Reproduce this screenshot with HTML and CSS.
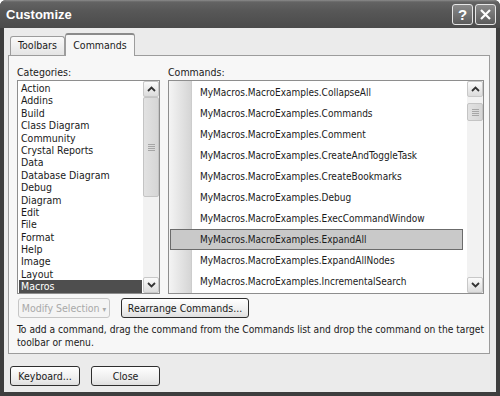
FILE: index.html
```html
<!DOCTYPE html>
<html>
<head>
  <meta charset="utf-8">
  <title>Customize</title>
  <link rel="stylesheet" href="styles.css">
</head>
<body>
  <div class="window">
    <div class="titlebar">
      <span class="title">Customize</span>
      <div class="caption">
        <span class="cap-btn help">?</span>
        <span class="cap-btn">
          <svg width="13" height="13" viewBox="0 0 13 13"><path d="M2 2 L11 11 M11 2 L2 11" stroke="#fff" stroke-width="2.2" fill="none"/></svg>
        </span>
      </div>
    </div>

    <div class="client">
      <div class="tabs">
        <div class="tab toolbars">Toolbars</div>
        <div class="tab active">Commands</div>
      </div>

      <div class="panel">
        <div class="lists">
          <div class="cat-col">
            <div class="label">Categories:</div>
            <div class="listbox">
              <ul class="cat-items">
                <li>Action</li>
                <li>Addins</li>
                <li>Build</li>
                <li>Class Diagram</li>
                <li>Community</li>
                <li>Crystal Reports</li>
                <li>Data</li>
                <li>Database Diagram</li>
                <li>Debug</li>
                <li>Diagram</li>
                <li>Edit</li>
                <li>File</li>
                <li>Format</li>
                <li>Help</li>
                <li>Image</li>
                <li>Layout</li>
                <li class="selected">Macros</li>
              </ul>
              <div class="scrollbar">
                <span class="sb-btn"><svg width="9" height="6" viewBox="0 0 9 6"><path d="M1 5 L4.5 1.5 L8 5" stroke="#333" stroke-width="1.8" fill="none"/></svg></span>
                <span class="sb-thumb tall"><i></i><i></i><i></i><i></i></span>
                <span class="sb-track"></span>
                <span class="sb-btn"><svg width="9" height="6" viewBox="0 0 9 6"><path d="M1 1 L4.5 4.5 L8 1" stroke="#333" stroke-width="1.8" fill="none"/></svg></span>
              </div>
            </div>
          </div>

          <div class="cmd-col">
            <div class="label">Commands:</div>
            <div class="listbox">
              <ul class="cmd-items">
                <li>MyMacros.MacroExamples.CollapseAll</li>
                <li>MyMacros.MacroExamples.Commands</li>
                <li>MyMacros.MacroExamples.Comment</li>
                <li>MyMacros.MacroExamples.CreateAndToggleTask</li>
                <li>MyMacros.MacroExamples.CreateBookmarks</li>
                <li>MyMacros.MacroExamples.Debug</li>
                <li>MyMacros.MacroExamples.ExecCommandWindow</li>
                <li class="selected">MyMacros.MacroExamples.ExpandAll</li>
                <li>MyMacros.MacroExamples.ExpandAllNodes</li>
                <li>MyMacros.MacroExamples.IncrementalSearch</li>
              </ul>
              <div class="scrollbar">
                <span class="sb-btn"><svg width="9" height="6" viewBox="0 0 9 6"><path d="M1 5 L4.5 1.5 L8 5" stroke="#333" stroke-width="1.8" fill="none"/></svg></span>
                <span class="sb-thumb short"><i></i><i></i><i></i><i></i></span>
                <span class="sb-track"></span>
                <span class="sb-btn"><svg width="9" height="6" viewBox="0 0 9 6"><path d="M1 1 L4.5 4.5 L8 1" stroke="#333" stroke-width="1.8" fill="none"/></svg></span>
              </div>
            </div>
          </div>
        </div>

        <div class="actions">
          <button class="btn disabled modify">Modify Selection <span class="drop">&#9662;</span></button>
          <button class="btn rearrange">Rearrange Commands...</button>
        </div>

        <p class="hint">To add a command, drag the command from the Commands list and drop the command on the target toolbar or menu.</p>
      </div>

      <div class="footer">
        <button class="btn keyboard">Keyboard...</button>
        <button class="btn close">Close</button>
      </div>
    </div>
  </div>
</body>
</html>
```

FILE: styles.css
```css
* { box-sizing: border-box; }
body { margin: 0; background: #fff; font-family: "DejaVu Sans Condensed", "DejaVu Sans", "Liberation Sans", sans-serif; font-stretch: condensed; font-size: 10px; color: #1a1a1a; }

.window { width: 500px; height: 396px; background: #3e3e3e; padding-bottom: 4px; display: flex; flex-direction: column; border-radius: 6px 6px 0 0; }

/* title bar */
.titlebar { height: 28px; flex: none; display: flex; align-items: center; justify-content: space-between; padding: 0 4px 0 6px; border-radius: 6px 6px 0 0; background: linear-gradient(#8c8c8c 0, #636363 2px, #575757 40%, #4b4b4b 100%); }
.title { color: #fff; font-family: "Liberation Sans", Arial, sans-serif; font-weight: bold; font-size: 13px; }
.caption { display: flex; gap: 2px; }
.cap-btn { width: 21px; height: 21px; border: 1px solid #e6e6e6; border-radius: 3px; background: linear-gradient(#8a8a8a, #5c5c5c); display: flex; align-items: center; justify-content: center; color: #fff; }
.cap-btn.help { font-family: "Liberation Sans", Arial, sans-serif; font-weight: bold; font-size: 15px; }

/* client area */
.client { flex: 1; margin: 0 4px; background: #ebebeb; padding: 4px 6px 0 4px; display: flex; flex-direction: column; }

.tabs { display: flex; align-items: flex-end; height: 24px; padding: 1px 0 0 2px; margin-bottom: -1px; position: relative; z-index: 1; }
.tab { width: 55px; height: 19px; margin-bottom: 1px; text-align: center; line-height: 17px; border: 1px solid #9c9c9c; border-bottom: none; border-radius: 3px 3px 0 0; background: linear-gradient(#fafafa, #e4e4e4); font-size: 10.5px; }
.tab.active { width: 70px; height: 23px; margin-bottom: 0; line-height: 21px; background: #f7f7f7; border-top: 2px solid #8a8a8a; }

.panel { height: 299px; border: 1px solid #9c9c9c; background: #f7f7f7; padding: 10px 0 0 8px; }

.lists { display: flex; gap: 8px; }
.cat-col { width: 143px; }
.cmd-col { width: 316px; }
.label { height: 13px; line-height: 13px; margin-bottom: 1px; font-size: 10.5px; }

.listbox { height: 214px; border: 1px solid #8e8e8e; background: #fff; display: flex; }

.cat-items { flex: 1; list-style: none; margin: 0; padding: 1px; font-size: 10.5px; }
.cat-items li { height: 12.4px; line-height: 12.4px; padding-left: 2px; white-space: nowrap; }
.cat-items li.selected { background: #4e4e4e; color: #fff; }

.cmd-items { flex: 1; list-style: none; margin: 0; padding: 1px 4px 1px 2px; background: linear-gradient(to right, #f4f4f4 0, #d5d5d5 22px, #c4c4c4 23px, #fff 23px); }
.cmd-items li { height: 21px; line-height: 19px; padding-left: 28px; border: 1px solid transparent; white-space: nowrap; }
.cmd-items li.selected { background: #c9c9c9; border-color: #6b6b6b; margin-left: -1px; padding-left: 29px; }

/* scrollbars */
.scrollbar { width: 16px; flex: none; display: flex; flex-direction: column; background: #f2f2f2; }
.sb-btn { width: 16px; height: 16px; flex: none; border: 1px solid #c8c8c8; border-radius: 2px; background: linear-gradient(#fbfbfb, #dcdcdc); display: flex; align-items: center; justify-content: center; }
.sb-thumb { flex: none; border: 1px solid #c4c4c4; border-radius: 2px; background: linear-gradient(to right, #e2e2e2, #d6d6d6); display: flex; flex-direction: column; align-items: center; justify-content: center; gap: 1px; }
.sb-thumb i { display: block; width: 7px; height: 1px; background: #a6a6a6; }
.sb-thumb.tall { height: 100px; }
.sb-thumb.short { height: 18px; margin-top: 6px; }
.sb-track { flex: 1; }

/* buttons */
.btn { height: 20px; padding: 0; border: 1px solid #2e2e2e; border-radius: 3px; background: linear-gradient(#ffffff, #ececec 70%, #dedede); font-family: inherit; font-stretch: condensed; font-size: 10.5px; color: #1a1a1a; }
.btn.disabled { border-color: #c6c6c6; color: #a9a9a9; background: #f4f4f4; }
.drop { font-size: 8px; }

.actions { display: flex; gap: 11px; margin: 4px 0 0 1px; }
.modify { width: 92px; }
.rearrange { width: 128px; }

.hint { margin: 5px 0 0; line-height: 13px; font-size: 10.2px; }

.footer { display: flex; gap: 11px; padding: 12px 0 0 2px; }
.keyboard { width: 70px; }
.close { width: 69px; }
```
